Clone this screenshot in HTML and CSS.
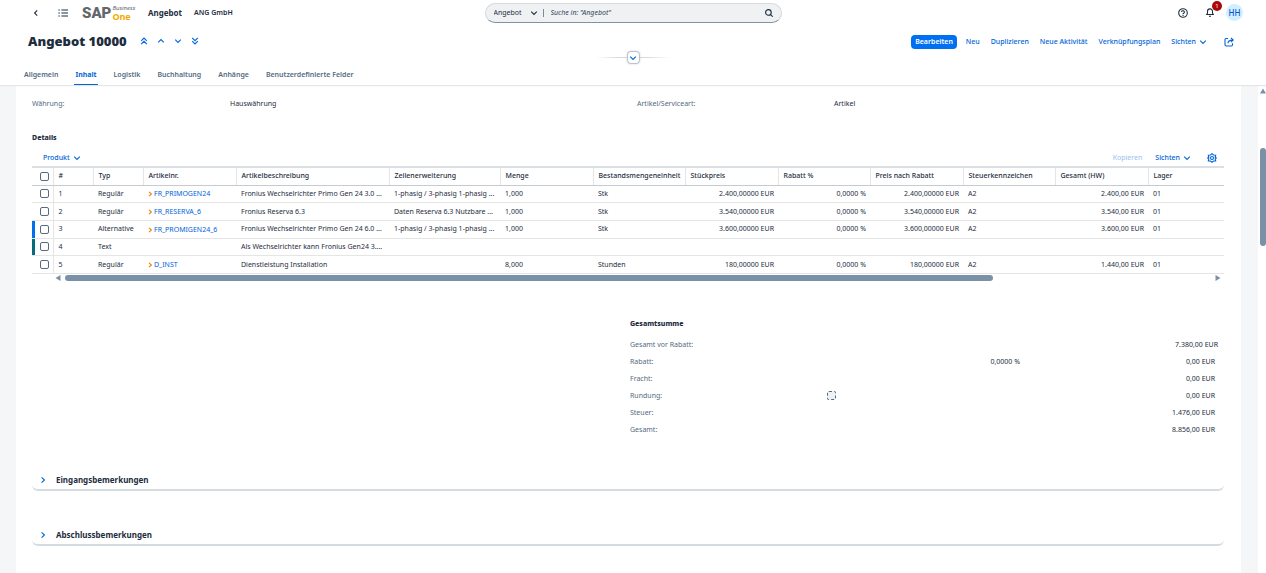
FILE: index.html
```html
<!DOCTYPE html>
<html lang="de">
<head>
    <meta charset="UTF-8">
    <meta name="viewport" content="width=device-width, initial-scale=1.0">
    <title>Angebot 10000</title>
    <link rel="stylesheet" href="styles.css">
</head>
<body>
    <svg class="sprite" aria-hidden="true">
        <symbol id="down" viewBox="0 0 8 8"><path d="M1.2 2.6 4 5.4 6.8 2.6"/></symbol>
        <symbol id="up" viewBox="0 0 8 8"><path d="M1.2 5.4 4 2.6 6.8 5.4"/></symbol>
        <symbol id="right" viewBox="0 0 8 8"><path d="M2.6 1.4 5.4 4 2.6 6.6"/></symbol>
        <symbol id="left" viewBox="0 0 8 8"><path d="M5.2 1.4 2.6 4 5.2 6.6"/></symbol>
        <symbol id="first" viewBox="0 0 8 8"><path d="M1.2 3.8 4 1 6.8 3.8M1.2 7.2 4 4.4 6.8 7.2"/></symbol>
        <symbol id="last" viewBox="0 0 8 8"><path d="M1.2.8 4 3.6 6.8.8M1.2 4.2 4 7 6.8 4.2"/></symbol>
        <symbol id="link" viewBox="0 0 5 6"><path d="M1 .8 3.4 3 1 5.2"/></symbol>
    </svg>

    <header>
        <div class="shell">
            <div class="shell-left">
                <button class="icon-btn back" aria-label="Zurück"><svg class="icon"><use href="#left"/></svg></button>
                <button class="icon-btn" aria-label="Menü">
                    <svg class="icon menu-icon" viewBox="0 0 10 8"><path d="M3.4 1H10M3.4 4H10M3.4 7H10M.4 1H1.8M.4 4H1.8M.4 7H1.8"/></svg>
                </button>
                <div class="logo">
                    <span class="logo-sap">SAP</span>
                    <span class="logo-b1"><span class="logo-business">Business</span><span class="logo-one">One</span></span>
                </div>
                <span class="app-name">Angebot</span>
                <span class="company">ANG GmbH</span>
            </div>
            <form class="search">
                <select aria-label="Suchbereich"><option>Angebot</option></select>
                <svg class="icon"><use href="#down"/></svg>
                <span class="search-line"></span>
                <input type="text" aria-label="Suche" placeholder='Suche in: "Angebot"'>
                <button type="button" class="icon-btn" aria-label="Suchen">
                    <svg class="icon" viewBox="0 0 8 8"><circle cx="3.4" cy="3.4" r="2.8"/><path d="M5.4 5.4 7.7 7.7"/></svg>
                </button>
            </form>
            <div class="shell-right">
                <button class="icon-btn" aria-label="Hilfe">
                    <svg class="icon help-icon" viewBox="0 0 10 10"><circle cx="5" cy="5" r="4.3"/><path d="M3.6 4.1a1.4 1.3 0 1 1 2.1 1.1Q5 5.5 5 6.2M5 7v.9"/></svg>
                </button>
                <button class="icon-btn bell" aria-label="Benachrichtigungen">
                    <svg class="icon bell-icon" viewBox="0 0 8 9"><path d="M.7 6.5 1.5 5.2V3.4a2.5 2.5 0 0 1 5 0v1.8l.8 1.3zM3 8.2h2"/></svg>
                    <span class="badge">1</span>
                </button>
                <span class="avatar">HH</span>
            </div>
        </div>

        <div class="title-row">
            <h1>Angebot 10000</h1>
            <div class="record-nav">
                <button class="icon-btn" aria-label="Erster"><svg class="icon"><use href="#first"/></svg></button>
                <button class="icon-btn" aria-label="Vorheriger"><svg class="icon"><use href="#up"/></svg></button>
                <button class="icon-btn" aria-label="Nächster"><svg class="icon"><use href="#down"/></svg></button>
                <button class="icon-btn" aria-label="Letzter"><svg class="icon"><use href="#last"/></svg></button>
            </div>
            <div class="actions">
                <button class="primary">Bearbeiten</button>
                <button>Neu</button>
                <button>Duplizieren</button>
                <button>Neue Aktivität</button>
                <button>Verknüpfungsplan</button>
                <button class="views">Sichten <svg class="icon"><use href="#down"/></svg></button>
                <button class="share" aria-label="Teilen">
                    <svg class="icon share-icon" viewBox="0 0 10 10"><path d="M4 1.5H2.2Q1 1.5 1 2.7v5.1Q1 9 2.2 9h5.1q1.2 0 1.2-1.2V6.2M4 6.3q0-3.2 4.6-3.2M7 1l2.2 2.1L7 5.2"/></svg>
                </button>
            </div>
        </div>

        <div class="expander">
            <button class="icon-btn" aria-label="Kopfbereich erweitern"><svg class="icon"><use href="#down"/></svg></button>
        </div>

        <nav class="tabs">
            <a href="#allgemein">Allgemein</a>
            <a href="#inhalt" class="active">Inhalt</a>
            <a href="#logistik">Logistik</a>
            <a href="#buchhaltung">Buchhaltung</a>
            <a href="#anhaenge">Anhänge</a>
            <a href="#felder">Benutzerdefinierte Felder</a>
        </nav>
    </header>

    <main>
        <div class="page">
            <dl class="fields">
                <dt>Währung:</dt>
                <dd>Hauswährung</dd>
                <dt>Artikel/Serviceart:</dt>
                <dd>Artikel</dd>
            </dl>

            <h2>Details</h2>
            <div class="toolbar">
                <button>Produkt <svg class="icon"><use href="#down"/></svg></button>
                <button class="copy" disabled>Kopieren</button>
                <button>Sichten <svg class="icon"><use href="#down"/></svg></button>
                <button class="settings" aria-label="Einstellungen">
                    <svg class="icon gear-icon" viewBox="0 0 10 10"><path d="M5 .7 6.5 2l2.2.3-.5 2L9.3 5l-1.1.9.5 2L6.5 8 5 9.3 3.5 8l-2.2-.1.5-2L.7 5l1.1-.7-.5-2L3.5 2z"/><circle cx="5" cy="5" r="1.5"/></svg>
                </button>
            </div>

            <table>
                <colgroup>
                    <col class="c-check"><col class="c-no"><col class="c-type"><col class="c-mid"><col class="c-desc"><col class="c-ext"><col class="c-mid"><col class="c-small"><col class="c-mid"><col class="c-small"><col class="c-mid"><col class="c-small"><col class="c-mid"><col>
                </colgroup>
                <thead>
                    <tr>
                        <th><input type="checkbox" aria-label="Alle auswählen"></th>
                        <th>#</th>
                        <th>Typ</th>
                        <th>Artikelnr.</th>
                        <th>Artikelbeschreibung</th>
                        <th>Zeilenerweiterung</th>
                        <th>Menge</th>
                        <th>Bestandsmengeneinheit</th>
                        <th>Stückpreis</th>
                        <th>Rabatt %</th>
                        <th>Preis nach Rabatt</th>
                        <th>Steuerkennzeichen</th>
                        <th>Gesamt (HW)</th>
                        <th>Lager</th>
                    </tr>
                </thead>
                <tbody>
                    <tr>
                        <td><input type="checkbox" aria-label="Zeile 1"></td>
                        <td>1</td>
                        <td>Regulär</td>
                        <td><a href="#item1"><svg class="icon"><use href="#link"/></svg>FR_PRIMOGEN24</a></td>
                        <td>Fronius Wechselrichter Primo Gen 24 3.0 ...</td>
                        <td>1-phasig / 3-phasig 1-phasig ...</td>
                        <td>1,000</td>
                        <td>Stk</td>
                        <td class="num">2.400,00000 EUR</td>
                        <td class="num">0,0000 %</td>
                        <td class="num">2.400,00000 EUR</td>
                        <td>A2</td>
                        <td class="num">2.400,00 EUR</td>
                        <td>01</td>
                    </tr>
                    <tr>
                        <td><input type="checkbox" aria-label="Zeile 2"></td>
                        <td>2</td>
                        <td>Regulär</td>
                        <td><a href="#item2"><svg class="icon"><use href="#link"/></svg>FR_RESERVA_6</a></td>
                        <td>Fronius Reserva 6.3</td>
                        <td>Daten Reserva 6.3 Nutzbare ...</td>
                        <td>1,000</td>
                        <td>Stk</td>
                        <td class="num">3.540,00000 EUR</td>
                        <td class="num">0,0000 %</td>
                        <td class="num">3.540,00000 EUR</td>
                        <td>A2</td>
                        <td class="num">3.540,00 EUR</td>
                        <td>01</td>
                    </tr>
                    <tr class="alternative">
                        <td><input type="checkbox" aria-label="Zeile 3"></td>
                        <td>3</td>
                        <td>Alternative</td>
                        <td><a href="#item3"><svg class="icon"><use href="#link"/></svg>FR_PROMIGEN24_6</a></td>
                        <td>Fronius Wechselrichter Primo Gen 24 6.0 ...</td>
                        <td>1-phasig / 3-phasig 1-phasig ...</td>
                        <td>1,000</td>
                        <td>Stk</td>
                        <td class="num">3.600,00000 EUR</td>
                        <td class="num">0,0000 %</td>
                        <td class="num">3.600,00000 EUR</td>
                        <td>A2</td>
                        <td class="num">3.600,00 EUR</td>
                        <td>01</td>
                    </tr>
                    <tr class="text">
                        <td><input type="checkbox" aria-label="Zeile 4"></td>
                        <td>4</td>
                        <td>Text</td>
                        <td></td>
                        <td>Als Wechselrichter kann Fronius Gen24 3....</td>
                        <td></td>
                        <td></td>
                        <td></td>
                        <td></td>
                        <td></td>
                        <td></td>
                        <td></td>
                        <td></td>
                        <td></td>
                    </tr>
                    <tr>
                        <td><input type="checkbox" aria-label="Zeile 5"></td>
                        <td>5</td>
                        <td>Regulär</td>
                        <td><a href="#item5"><svg class="icon"><use href="#link"/></svg>D_INST</a></td>
                        <td>Dienstleistung Installation</td>
                        <td></td>
                        <td>8,000</td>
                        <td>Stunden</td>
                        <td class="num">180,00000 EUR</td>
                        <td class="num">0,0000 %</td>
                        <td class="num">180,00000 EUR</td>
                        <td>A2</td>
                        <td class="num">1.440,00 EUR</td>
                        <td>01</td>
                    </tr>
                </tbody>
            </table>
            <div class="hscroll">
                <svg class="arrow" viewBox="0 0 6 6"><path d="M5.5 0v6L.5 3z"/></svg>
                <div class="htrack"><div class="hthumb"></div></div>
                <svg class="arrow" viewBox="0 0 6 6"><path d="M.5 0v6l5-3z"/></svg>
            </div>

            <section class="totals">
                <h2>Gesamtsumme</h2>
                <div class="total first"><span class="label">Gesamt vor Rabatt:</span><span class="amount">7.380,00 EUR</span></div>
                <div class="total"><span class="label">Rabatt:</span><span class="percent">0,0000 %</span><span class="amount">0,00 EUR</span></div>
                <div class="total"><span class="label">Fracht:</span><span class="amount">0,00 EUR</span></div>
                <div class="total"><label class="label" for="rounding">Rundung:</label><input type="checkbox" id="rounding" disabled><span class="amount">0,00 EUR</span></div>
                <div class="total"><span class="label">Steuer:</span><span class="amount">1.476,00 EUR</span></div>
                <div class="total"><span class="label">Gesamt:</span><span class="amount">8.856,00 EUR</span></div>
            </section>

            <button class="remarks"><svg class="icon"><use href="#right"/></svg>Eingangsbemerkungen</button>
            <button class="remarks"><svg class="icon"><use href="#right"/></svg>Abschlussbemerkungen</button>
        </div>
        <div class="vscroll">
            <svg class="arrow" viewBox="0 0 6 6"><path d="M0 5.5h6L3 .5z"/></svg>
            <div class="vthumb"></div>
        </div>
    </main>
</body>
</html>
```

FILE: styles.css
```css
* {
    box-sizing: border-box;
}

body {
    font-family: "Noto Sans", "Open Sans", sans-serif;
    font-size: 7px;
    line-height: 10px;
    margin: 0;
    height: 100vh;
    display: flex;
    flex-direction: column;
    overflow: hidden;
    color: #1d2d3e;
    background: #f5f6f7;
}

.sprite {
    display: none;
}

button, input, select {
    font: inherit;
    color: inherit;
    margin: 0;
    padding: 0;
    border: none;
    background: none;
}

button {
    cursor: pointer;
}

a {
    color: #0064d9;
    text-decoration: none;
}

.icon {
    width: 8px;
    height: 8px;
    flex: none;
    fill: none;
    stroke: currentColor;
    stroke-width: 1.1;
}

.icon-btn {
    display: flex;
    align-items: center;
    justify-content: center;
}

/* header */
header {
    background: white;
    position: relative;
    z-index: 1;
    box-shadow: 0 1px 1px #e3e5e8;
}

.shell {
    height: 25px;
    display: grid;
    grid-template-columns: 1fr 297px 1fr;
    align-items: center;
    padding: 0 23px;
}

.shell-left {
    display: flex;
    align-items: center;
    padding-left: 9px;
}

.back {
    margin-right: 18px;
}

.menu-icon {
    width: 10px;
}

.logo {
    display: flex;
    align-items: center;
    gap: 1px;
    width: 52px;
    margin: 0 14px;
}

.logo-sap {
    font: 900 15px/16px Roboto, sans-serif;
    color: #63666a;
}

.logo-b1 {
    display: flex;
    flex-direction: column;
}

.logo-business {
    font-size: 6px;
    line-height: 7px;
    font-style: italic;
    color: #63666a;
}

.logo-one {
    font-size: 9px;
    line-height: 9px;
    font-weight: bold;
    color: #f0ab00;
}

.app-name {
    font-size: 8px;
    font-weight: bold;
    margin-right: 12px;
}

.company {
    font-weight: 600;
}

.search {
    height: 20px;
    display: flex;
    align-items: center;
    padding: 0 8px;
    border: 1px solid #d5dadd;
    border-bottom-color: #7f93a5;
    border-radius: 10px;
    background: #eff1f2;
}

.search select {
    appearance: none;
    width: 36px;
}

.search-line {
    width: 1px;
    height: 8px;
    margin: 0 7px 0 5px;
    background: #758ca4;
}

.search input {
    flex: 1;
    min-width: 0;
    outline: none;
}

.search input::placeholder {
    color: #34465a;
    font-style: italic;
}

.shell-right {
    display: flex;
    justify-content: flex-end;
    align-items: center;
}

.help-icon, .share-icon {
    width: 10px;
    height: 10px;
}

.bell {
    position: relative;
    margin: 0 12px 0 18px;
}

.bell-icon {
    height: 9px;
}

.badge {
    position: absolute;
    left: 6px;
    top: -7px;
    width: 10px;
    height: 10px;
    border-radius: 5px;
    background: #aa0808;
    color: white;
    font-size: 6px;
}

.avatar {
    width: 17px;
    height: 17px;
    line-height: 17px;
    border-radius: 9px;
    text-align: center;
    background: #d1efff;
    color: #0057d2;
    font-size: 8px;
    font-weight: 500;
}

.title-row {
    height: 32px;
    display: flex;
    align-items: center;
    padding: 0 32px 0 28px;
}

h1 {
    margin: 0 13px 0 0;
    font-size: 13px;
    line-height: 16px;
    font-weight: 900;
}

.record-nav {
    display: flex;
    gap: 9px;
    color: #0064d9;
}

.actions {
    margin-left: auto;
    padding-top: 2px;
    display: flex;
    align-items: center;
    gap: 11px;
}

.actions button, .toolbar button {
    display: flex;
    align-items: center;
    gap: 3px;
    color: #0064d9;
    font-weight: 500;
}

.actions .primary {
    height: 14px;
    padding: 0 4px;
    margin-right: -2px;
    border-radius: 4px;
    background: #0070f2;
    color: white;
    font-weight: 600;
}

.actions .share {
    margin-left: 6px;
}

.expander {
    height: 1px;
    display: flex;
    align-items: center;
    justify-content: center;
    width: 74px;
    margin: 0 auto;
    background: linear-gradient(to right, transparent, #d5dadd 30%, #d5dadd 70%, transparent);
}

.expander button {
    flex: none;
    width: 13px;
    height: 13px;
    border: 1px solid #bcc3ca;
    border-radius: 4px;
    background: white;
    color: #0064d9;
    box-shadow: 0 0 2px #c5ccd3;
}

.tabs {
    height: 27px;
    display: flex;
    align-items: flex-end;
    gap: 15px;
    padding: 0 23px;
}

.tabs a {
    height: 16px;
    line-height: 12px;
    padding: 0 1px;
    color: #556b82;
    font-weight: 600;
}

.tabs .active {
    color: #0064d9;
    border-bottom: 1px solid #0064d9;
    font-weight: bold;
}

/* content */
main {
    flex: 1;
    min-height: 0;
    display: flex;
}

.page {
    flex: 1;
    min-width: 0;
    margin: 0 17px 0 16px;
    padding: 14px 17px 0 16px;
    background: white;
}

.fields {
    display: grid;
    grid-template-columns: 198fr 407fr 197fr 390fr;
    margin: 0 0 24px;
}

.fields dd {
    margin: 0;
}

.fields dt, .label {
    color: #556b82;
}

h2 {
    margin: 0;
    font-size: 7px;
    line-height: 10px;
    font-weight: 800;
}

.toolbar {
    height: 16px;
    display: flex;
    align-items: center;
    gap: 13px;
    margin-top: 7px;
    padding: 0 7px 0 11px;
}

.toolbar .copy {
    margin-left: auto;
    color: #99c1f0;
    font-weight: normal;
}

.toolbar .settings {
    margin-left: 3px;
}

.gear-icon {
    width: 10px;
    height: 10px;
}

table {
    width: 100%;
    height: 108px;
    table-layout: fixed;
    border-collapse: collapse;
    border-top: 2px solid #d9dfe3;
    border-bottom: 1px solid #a8b3bd;
}

thead tr {
    height: 18px;
}

tbody tr {
    height: 17px;
}

.c-check {
    width: 21px;
}

.c-no {
    width: 40px;
}

.c-type {
    width: 50px;
}

.c-mid {
    width: 93px;
}

.c-small {
    width: 92px;
}

.c-desc {
    width: 153px;
}

.c-ext {
    width: 111px;
}

th, td {
    padding: 0 4px 0 5px;
    text-align: left;
    white-space: nowrap;
    overflow: hidden;
    border-bottom: 1px solid #e5e5e5;
}

th {
    font-weight: 500;
    border-right: 1px solid #e5e5e5;
    border-bottom-color: #c3ccd3;
}

th:last-child {
    border-right: none;
}

th:first-child, td:first-child {
    padding: 0 0 0 8px;
    border-right: 1px solid #e5e5e5;
}

td a {
    display: flex;
    align-items: center;
    gap: 1px;
    padding-top: 1px;
}

td a .icon {
    width: 5px;
    height: 6px;
    color: #f08000;
}

.num {
    text-align: right;
}

.alternative td:first-child {
    box-shadow: inset 3px 0 #0070f2;
}

.text td:first-child {
    box-shadow: inset 3px 0 #046c7a;
}

input[type="checkbox"] {
    appearance: none;
    display: block;
    width: 9px;
    height: 9px;
    border: 1px solid #556b82;
    border-radius: 2px;
    background: white;
}

.hscroll {
    display: flex;
    align-items: center;
    gap: 4px;
    height: 8px;
    padding: 0 3px 0 23px;
}

.arrow {
    width: 6px;
    height: 6px;
    flex: none;
    fill: #7b91a8;
}

.htrack {
    flex: 1;
}

.hthumb {
    width: 81%;
    height: 6px;
    border-radius: 3px;
    background: #7b91a8;
}

.totals {
    margin: 37px 9px 33px 0;
    padding-left: 598px;
}

.total {
    display: grid;
    grid-template-columns: 197fr 193fr 195fr;
    align-items: center;
    height: 17px;
}

.totals h2 {
    margin-bottom: 7px;
}

.total.first {
    margin-right: -3px;
}

.percent {
    text-align: right;
}

.amount {
    grid-column: 3;
    text-align: right;
}

.total input[type="checkbox"] {
    border-style: dashed;
    background: #eff1f2;
}

.remarks {
    width: 100%;
    height: 20px;
    display: flex;
    align-items: center;
    gap: 9px;
    padding: 0 7px;
    margin-bottom: 35px;
    border-bottom: 2px solid #d5dce1;
    border-radius: 6px;
    font-size: 8px;
    font-weight: bold;
}

.remarks .icon {
    color: #0064d9;
}

.vscroll {
    width: 8px;
    background: white;
    padding: 3px 0 0 2px;
}

.vscroll .arrow {
    display: block;
}

.vthumb {
    width: 6px;
    height: 98px;
    margin-top: 54px;
    border-radius: 3px;
    background: #7b91a8;
}
```
